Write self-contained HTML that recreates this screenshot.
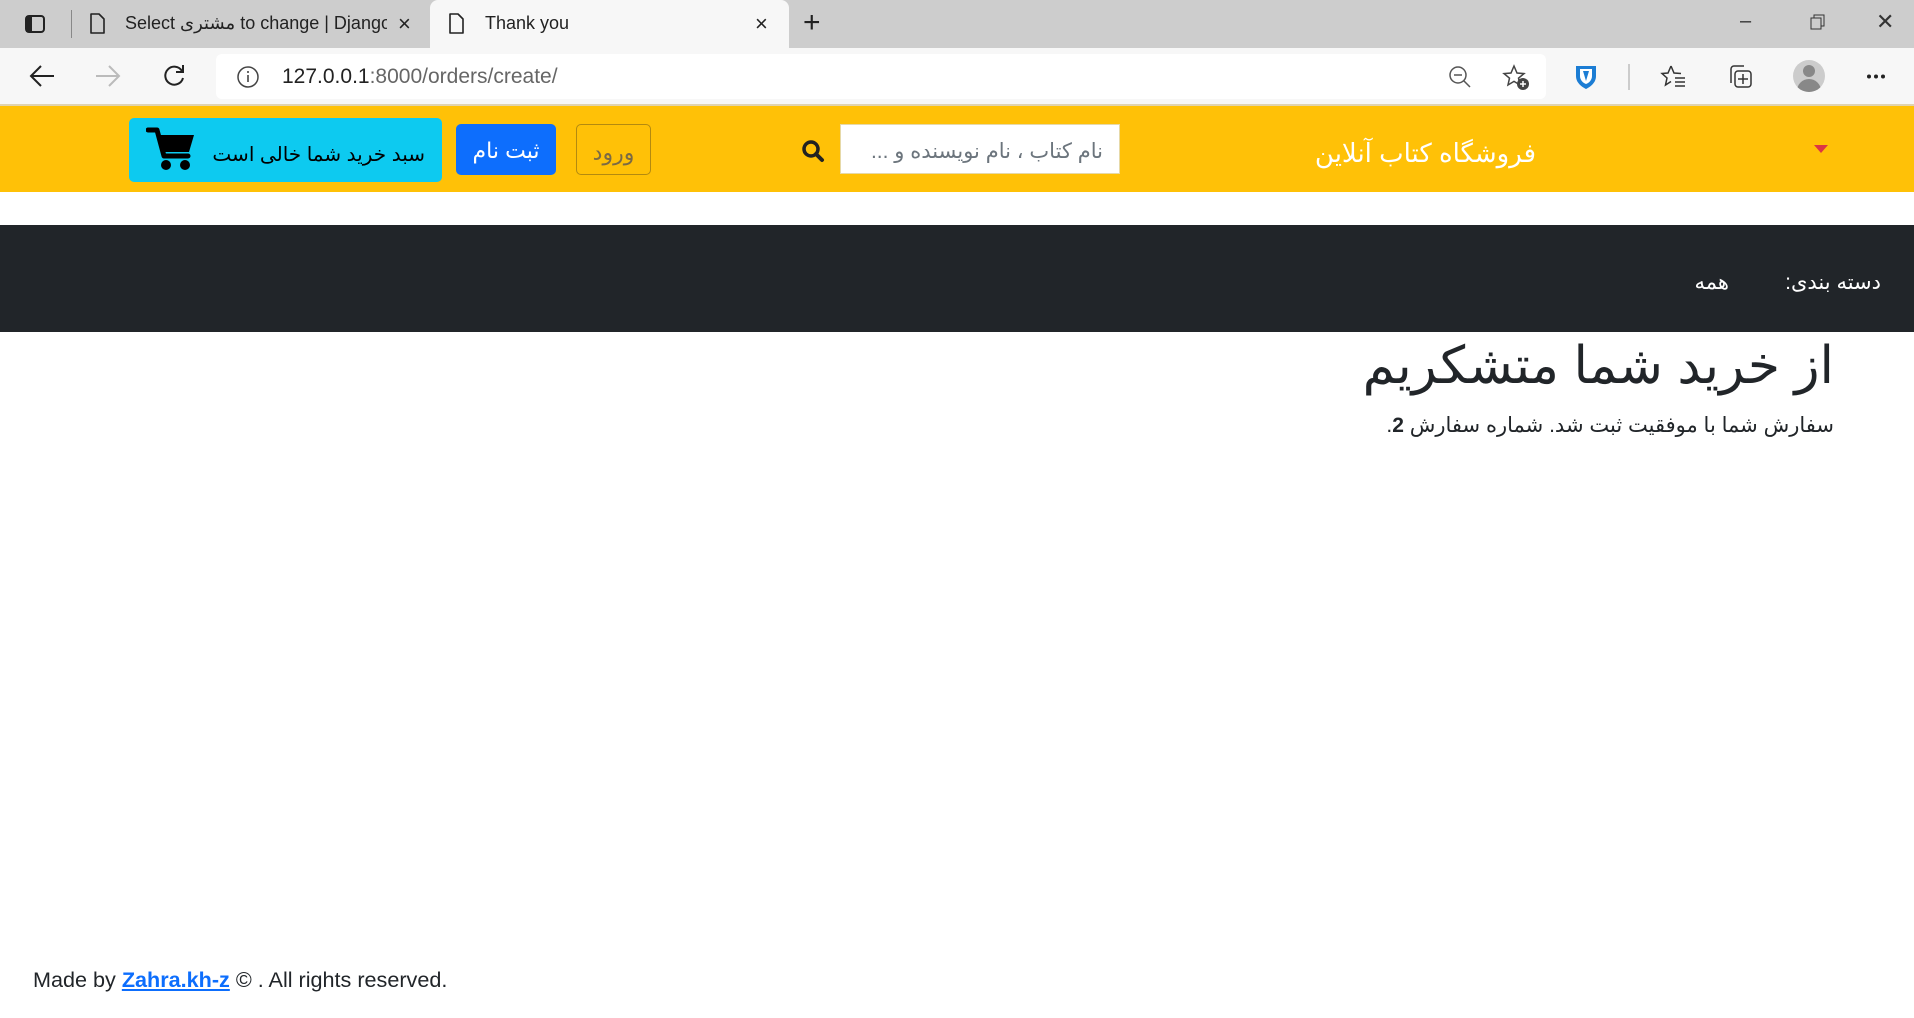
<!DOCTYPE html>
<html><head><meta charset="utf-8"><style>
*{margin:0;padding:0;box-sizing:border-box}
body{width:1914px;height:1018px;position:relative;overflow:hidden;background:#fff;font-family:"Liberation Sans","DejaVu Sans",sans-serif}
.a{position:absolute}
.fa{font-family:"Liberation Sans","DejaVu Sans","Noto Sans CJK SC",sans-serif;direction:rtl;white-space:nowrap}
</style></head><body>
<!-- tab bar -->
<div class="a" style="left:0;top:0;width:1914px;height:48px;background:#cdcdcd"></div>
<svg class="a" style="left:24px;top:14px" width="22" height="20"><rect x="2" y="2" width="18" height="16" rx="3" fill="none" stroke="#222" stroke-width="2"/><rect x="2" y="2" width="6" height="16" fill="#222"/></svg>
<div class="a" style="left:71px;top:10px;width:1px;height:28px;background:#888"></div>
<svg class="a" style="left:89px;top:13px" width="16" height="22"><path d="M2 1h8l5 5v14H2z" fill="none" stroke="#222" stroke-width="1.6" stroke-linejoin="round"/></svg>
<div class="a" style="left:125px;top:13px;font-size:18px;color:#222;white-space:nowrap;width:262px;overflow:hidden">Select مشتری to change | Django</div>
<div class="a" style="left:398px;top:11px;font-size:22px;color:#222">×</div>
<div class="a" style="left:430px;top:0;width:359px;height:48px;background:#f7f7f7;border-radius:8px 8px 0 0"></div>
<svg class="a" style="left:448px;top:13px" width="16" height="22"><path d="M2 1h8l5 5v14H2z" fill="none" stroke="#222" stroke-width="1.6" stroke-linejoin="round"/></svg>
<div class="a" style="left:485px;top:13px;font-size:18px;color:#222">Thank you</div>
<div class="a" style="left:755px;top:11px;font-size:22px;color:#222">×</div>
<div class="a" style="left:803px;top:6px;font-size:30px;color:#222;font-weight:300">+</div>
<div class="a" style="left:1740px;top:10px;font-size:20px;color:#333">–</div>
<svg class="a" style="left:1810px;top:14px" width="16" height="16"><rect x="1" y="4" width="10" height="11" fill="none" stroke="#333"/><path d="M4 4V1h10v11h-3" fill="none" stroke="#333"/></svg>
<div class="a" style="left:1876px;top:9px;font-size:22px;color:#333">✕</div>
<!-- address row -->
<div class="a" style="left:0;top:48px;width:1914px;height:57px;background:#f7f7f7"></div>
<svg class="a" style="left:28px;top:63px" width="28" height="26"><path d="M26 13H3M13 3L3 13l10 10" fill="none" stroke="#222" stroke-width="2"/></svg>
<svg class="a" style="left:94px;top:63px" width="28" height="26"><path d="M2 13h23M15 3l10 10-10 10" fill="none" stroke="#bbb" stroke-width="2"/></svg>
<svg class="a" style="left:161px;top:63px" width="26" height="26"><path d="M21 8A9 9 0 1 0 22 15" fill="none" stroke="#222" stroke-width="2"/><path d="M22 2v7h-7" fill="none" stroke="#222" stroke-width="2"/></svg>
<div class="a" style="left:216px;top:54px;width:1330px;height:45px;background:#fff;border-radius:6px"></div>
<svg class="a" style="left:236px;top:65px" width="24" height="24"><circle cx="12" cy="12" r="10" fill="none" stroke="#444" stroke-width="1.5"/><path d="M12 10v7M12 6v2" stroke="#444" stroke-width="1.6"/></svg>
<div class="a" style="left:282px;top:65px;font-size:21px;color:#222">127.0.0.1<span style="color:#666">:8000/orders/create/</span></div>
<svg class="a" style="left:1448px;top:65px" width="24" height="24"><circle cx="10" cy="10" r="8" fill="none" stroke="#555" stroke-width="1.5"/><path d="M6 10h8M16 16l6 6" stroke="#555" stroke-width="1.5"/></svg>
<svg class="a" style="left:1502px;top:64px" width="28" height="28"><path d="M12 2l3 7 7 .6-5.5 4.6L18 21l-6-3.6L6 21l1.5-6.8L2 9.6 9 9z" fill="none" stroke="#444" stroke-width="1.5"/><circle cx="21" cy="20" r="6" fill="#444"/><path d="M21 17v6M18 20h6" stroke="#fff" stroke-width="1.5"/></svg>
<svg class="a" style="left:1574px;top:63px" width="24" height="28"><path d="M2 3h20v10c0 7-6 11-10 13C8 24 2 20 2 13z" fill="#1c7dd4"/><path d="M6 6h12v7c0 4-3 7-6 8-3-1-6-4-6-8z" fill="#fff"/><path d="M9 8h6l-3 10z" fill="#1c7dd4"/></svg>
<div class="a" style="left:1628px;top:64px;width:2px;height:26px;background:#ccc"></div>
<svg class="a" style="left:1660px;top:63px" width="28" height="28"><path d="M11 3l3 7 7 .5M11 3L8 10l-6 .5 5 4.5-1.5 7 5.5-3.5" fill="none" stroke="#333" stroke-width="1.5"/><path d="M15 15h10M15 19h10M15 23h10" stroke="#333" stroke-width="1.5"/></svg>
<svg class="a" style="left:1726px;top:63px" width="28" height="28"><path d="M5 20V6a3 3 0 0 1 3-3h10" fill="none" stroke="#333" stroke-width="1.5"/><rect x="9" y="8" width="16" height="16" rx="3" fill="none" stroke="#333" stroke-width="1.5"/><path d="M17 11v10M12 16h10" stroke="#333" stroke-width="1.5"/></svg>
<div class="a" style="left:1793px;top:60px;width:32px;height:32px;border-radius:50%;background:#ccc;overflow:hidden"><div class="a" style="left:10px;top:5px;width:12px;height:12px;border-radius:50%;background:#888"></div><div class="a" style="left:4px;top:19px;width:24px;height:16px;border-radius:12px 12px 0 0;background:#888"></div></div>
<svg class="a" style="left:1866px;top:74px" width="20" height="5"><circle cx="3" cy="2.5" r="2" fill="#222"/><circle cx="10" cy="2.5" r="2" fill="#222"/><circle cx="17" cy="2.5" r="2" fill="#222"/></svg>
<div class="a" style="left:0;top:104px;width:1914px;height:2px;background:#e0d3b0"></div>
<!-- yellow header -->
<div class="a" style="left:0;top:106px;width:1914px;height:86px;background:#ffc107"></div>
<div class="a" style="left:129px;top:118px;width:313px;height:64px;background:#0dcaf0;border-radius:5px"></div>
<svg class="a" style="left:146px;top:126px" width="50" height="46"><path d="M2 4h9l7 26h24" fill="none" stroke="#000" stroke-width="5" stroke-linecap="round" stroke-linejoin="round"/><path d="M12 9h36l-5 17H17z" fill="#000"/><circle cx="20" cy="39" r="5" fill="#000"/><circle cx="39" cy="39" r="5" fill="#000"/></svg>
<div class="a fa" style="right:1489px;top:142px;font-size:20px;color:#000">سبد خرید شما خالی است</div>
<div class="a" style="left:456px;top:124px;width:100px;height:51px;background:#0d6efd;border-radius:5px"></div>
<div class="a fa" style="left:456px;top:138px;width:100px;text-align:center;font-size:22px;color:#fff;direction:ltr">ثبت نام</div>
<div class="a" style="left:576px;top:124px;width:75px;height:51px;border:1px solid #b38a10;border-radius:5px"></div>
<div class="a fa" style="left:576px;top:140px;width:75px;text-align:center;font-size:22px;color:#7a6a45;direction:ltr">ورود</div>
<svg class="a" style="left:801px;top:139px" width="24" height="24"><circle cx="10" cy="10" r="7" fill="none" stroke="#222" stroke-width="3.5"/><path d="M15 15l6 6" stroke="#222" stroke-width="4" stroke-linecap="round"/></svg>
<div class="a" style="left:840px;top:124px;width:280px;height:50px;background:#fff;border:1px solid #e6d9a8"></div>
<div class="a fa" style="right:811px;top:139px;font-size:21px;color:#6c757d">نام کتاب ، نام نویسنده و ...</div>
<div class="a fa" style="right:378px;top:138px;font-size:26px;color:#fff">فروشگاه کتاب آنلاین</div>
<svg class="a" style="left:1814px;top:145px" width="14" height="9"><path d="M0 0h14L7 8z" fill="#dc3545"/></svg>
<!-- dark nav -->
<div class="a" style="left:0;top:225px;width:1914px;height:107px;background:#212529"></div>
<div class="a fa" style="right:33px;top:270px;font-size:21px;color:#fff">دسته بندی:</div>
<div class="a fa" style="right:185px;top:270px;font-size:21px;color:#fff">همه</div>
<!-- content -->
<div class="a fa" style="right:80px;top:336px;font-size:52px;color:#212529">از خرید شما متشکریم</div>
<div class="a fa" style="right:80px;top:413px;font-size:21px;color:#212529">سفارش شما با موفقیت ثبت شد. شماره سفارش <b>2</b>.</div>
<div class="a" style="left:33px;top:967px;font-size:21.6px;color:#212529;white-space:nowrap">Made by <a style="color:#0d6efd;font-weight:bold;text-decoration:underline">Zahra.kh-z</a> © . All rights reserved.</div>
</body></html>
